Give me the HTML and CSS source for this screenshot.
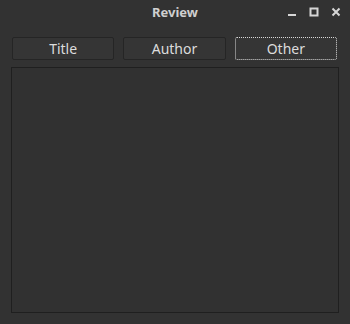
FILE: index.html
```html
<!DOCTYPE html>
<html lang="en">
<head>
    <meta charset="UTF-8">
    <meta name="viewport" content="width=device-width, initial-scale=1.0">
    <title>Review</title>
    <link rel="stylesheet" href="styles.css">
</head>
<body>
    <div class="window">
        <div class="titlebar">
            <span class="title">Review</span>
            <div class="controls">
                <svg class="ctl" width="10" height="10" viewBox="0 0 10 10"><rect x="1" y="7" width="8" height="2" fill="#d6d6d6"/></svg>
                <svg class="ctl" width="10" height="10" viewBox="0 0 10 10"><rect x="1.5" y="1.5" width="7" height="7" fill="none" stroke="#d6d6d6" stroke-width="2"/></svg>
                <svg class="ctl" width="10" height="10" viewBox="0 0 10 10"><path d="M1.5 1.5 L8.5 8.5 M8.5 1.5 L1.5 8.5" stroke="#d6d6d6" stroke-width="2"/></svg>
            </div>
        </div>

        <div class="tabs">
            <button class="btn">Title</button>
            <button class="btn">Author</button>
            <button class="btn focused">Other</button>
        </div>

        <div class="list"></div>
    </div>
</body>
</html>
```

FILE: styles.css
```css
body {
    margin: 0;
    background-color: #323232;
    font-family: "Noto Sans", "DejaVu Sans", sans-serif;
    color: #dcdcdc;
}
.window {
    width: 350px;
    height: 324px;
    display: flex;
    flex-direction: column;
}
.titlebar {
    height: 24px;
    position: relative;
    display: flex;
    align-items: center;
    justify-content: center;
}
.title {
    font-size: 13px;
    font-weight: bold;
    color: #cfcfcf;
}
.controls {
    position: absolute;
    right: 9px;
    top: 7px;
    display: flex;
    gap: 12px;
}
.ctl {
    display: block;
}
.tabs {
    display: grid;
    grid-template-columns: 1fr 1fr 1fr;
    gap: 9px;
    padding: 13px 13px 0 12px;
}
.btn {
    height: 23px;
    background: #353535;
    border: 1px solid #252525;
    border-radius: 2px;
    color: #dcdcdc;
    font-family: inherit;
    font-size: 14px;
    padding: 0;
}
.btn.focused {
    border: 1px dotted #d8d8d8;
}
.list {
    flex: 1;
    margin: 7px 11px 11px 11px;
    background: #313131;
    border: 1px solid #1f1f1f;
}
```
